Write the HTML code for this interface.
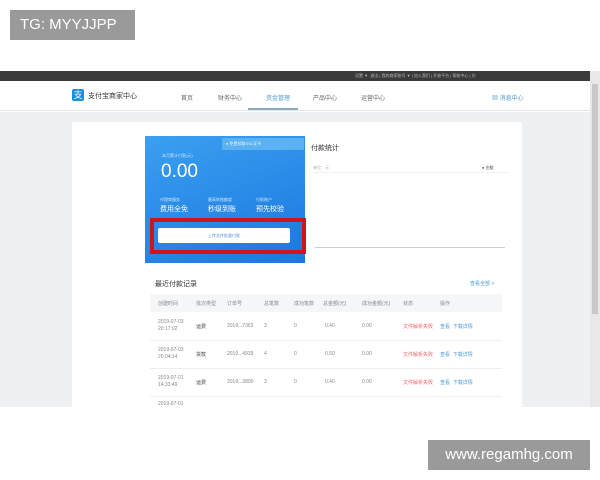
<!DOCTYPE html>
<html><head><meta charset="utf-8"><style>
*{margin:0;padding:0;box-sizing:border-box}
body{width:600px;height:480px;background:#fff;position:relative;overflow:hidden;font-family:"Liberation Sans","Noto Sans CJK SC",sans-serif}
.a{position:absolute}
.t{font-size:5px;color:#888;white-space:nowrap}
</style></head><body>
<div class="a" style="left:10px;top:10px;width:125px;height:30px;background:#9a9a9a;color:#fff;font-size:15px;line-height:30px;padding-left:10px">TG: MYYJJPP</div>
<div class="a" style="left:0;top:71px;width:590px;height:10px;background:#3a3a3a"></div>
<div class="a t" style="left:355px;top:73px;color:#bbb;font-size:4px">设置 ▼ &nbsp;退出 | 我的商家账号 ▼ | 加入我们 | 开放平台 | 帮助中心 | ▦</div>
<div class="a" style="left:590px;top:71px;width:10px;height:336px;background:#e8e8e8"></div>
<div class="a" style="left:592px;top:84px;width:6px;height:230px;background:#c8c8c8"></div>
<div class="a" style="left:0;top:81px;width:590px;height:30px;background:#fff;border-bottom:1px solid #e4e4e4"></div>
<div class="a" style="left:72px;top:89px;width:12px;height:12px;background:#1a8fe0;border-radius:2px;color:#fff;font-size:9px;line-height:12px;text-align:center">支</div>
<div class="a" style="left:88px;top:91px;font-size:7px;color:#333">支付宝商家中心</div>
<div class="a t" style="left:181px;top:93px;font-size:6px;color:#666">首页</div>
<div class="a t" style="left:218px;top:93px;font-size:6px;color:#666">财务中心</div>
<div class="a t" style="left:266px;top:93px;font-size:6px;color:#4a9ad8">资金管理</div>
<div class="a" style="left:248px;top:108px;width:50px;height:2px;background:#8ab"></div>
<div class="a t" style="left:313px;top:93px;font-size:6px;color:#666">产品中心</div>
<div class="a t" style="left:361px;top:93px;font-size:6px;color:#666">运营中心</div>
<div class="a t" style="left:492px;top:93px;font-size:6px;color:#4a9ad8">▦ 消息中心</div>
<div class="a" style="left:0;top:112px;width:590px;height:295px;background:#eef0f3"></div>
<div class="a" style="left:72px;top:122px;width:450px;height:285px;background:#fff"></div>
<div class="a" style="left:145px;top:136px;width:160px;height:127px;background:linear-gradient(160deg,#3aa0f0,#1b77e0)"></div>
<div class="a" style="left:222px;top:138px;width:82px;height:12px;background:#5bb2f2;color:#e6f2ff;font-size:4px;line-height:12px;padding-left:4px">● 免费领取SSL证书</div>
<div class="a t" style="left:162px;top:153px;color:#cfe6ff;font-size:4px">本月累计付款(元)</div>
<div class="a" style="left:161px;top:161px;color:#fff;font-size:19px">0.00</div>
<div class="a t" style="left:160px;top:197px;color:#cfe6ff;font-size:4px">代理商服务</div>
<div class="a t" style="left:208px;top:197px;color:#cfe6ff;font-size:4px">最高转账额度</div>
<div class="a t" style="left:256px;top:197px;color:#cfe6ff;font-size:4px">付款账户</div>
<div class="a t" style="left:160px;top:204px;color:#fff;font-size:7px">费用全免</div>
<div class="a t" style="left:208px;top:204px;color:#fff;font-size:7px">秒级到账</div>
<div class="a t" style="left:256px;top:204px;color:#fff;font-size:7px">预先校验</div>
<div class="a" style="left:150px;top:218px;width:156px;height:36px;border:4px solid #d0141c"></div>
<div class="a" style="left:158px;top:228px;width:132px;height:15px;background:#fff;border-radius:2px;color:#4a90d8;font-size:4px;text-align:center;line-height:15px">上传文件批量付款</div>
<div class="a t" style="left:311px;top:143px;color:#333;font-size:7px">付款统计</div>
<div class="a t" style="left:313px;top:165px;color:#aaa;font-size:4px">单位：元</div>
<div class="a t" style="left:482px;top:165px;color:#555;font-size:4px">● 金额</div>
<div class="a" style="left:313px;top:172px;width:195px;height:1px;background:#f0f0f0"></div>
<div class="a" style="left:315px;top:247px;width:190px;height:1px;background:#ccc"></div>
<div class="a" style="left:145px;top:267px;width:363px;height:140px;background:#fff"></div>
<div class="a t" style="left:155px;top:279px;color:#333;font-size:7px">最近付款记录</div>
<div class="a t" style="left:470px;top:280px;color:#4a9ad8;font-size:5px">查看全部 &gt;</div>
<div class="a" style="left:150px;top:294px;width:352px;height:18px;background:#f5f6f8"></div>
<div class="a t" style="top:300px;left:158px">创建时间</div><div class="a t" style="top:300px;left:196px">批次类型</div><div class="a t" style="top:300px;left:227px">订单号</div><div class="a t" style="top:300px;left:264px">总笔数</div><div class="a t" style="top:300px;left:294px">成功笔数</div><div class="a t" style="top:300px;left:323px">总金额(元)</div><div class="a t" style="top:300px;left:362px">成功金额(元)</div><div class="a t" style="top:300px;left:403px">状态</div><div class="a t" style="top:300px;left:440px">操作</div>
<div class="a" style="left:150px;top:340px;width:352px;height:1px;background:#eee"></div>
<div class="a" style="left:150px;top:368px;width:352px;height:1px;background:#eee"></div>
<div class="a" style="left:150px;top:396px;width:352px;height:1px;background:#eee"></div>
<div class="a t" style="top:319px;left:158px;line-height:7px">2019-07-03<br>20:17:02</div><div class="a t" style="top:323px;left:196px;color:#444">运费</div><div class="a t" style="top:323px;left:227px">2019...7363</div><div class="a t" style="top:323px;left:264px">3</div><div class="a t" style="top:323px;left:294px">0</div><div class="a t" style="top:323px;left:325px">0.40</div><div class="a t" style="top:323px;left:362px">0.00</div><div class="a t" style="top:323px;left:403px;color:#e66">文件解析失败</div><div class="a t" style="top:323px;left:440px;color:#4a9ad8">查看 &nbsp;下载详情</div>
<div class="a t" style="top:347px;left:158px;line-height:7px">2019-07-03<br>20:04:14</div><div class="a t" style="top:351px;left:196px;color:#444">货款</div><div class="a t" style="top:351px;left:227px">2019...4939</div><div class="a t" style="top:351px;left:264px">4</div><div class="a t" style="top:351px;left:294px">0</div><div class="a t" style="top:351px;left:325px">0.50</div><div class="a t" style="top:351px;left:362px">0.00</div><div class="a t" style="top:351px;left:403px;color:#e66">文件解析失败</div><div class="a t" style="top:351px;left:440px;color:#4a9ad8">查看 &nbsp;下载详情</div>
<div class="a t" style="top:375px;left:158px;line-height:7px">2019-07-01<br>14:33:49</div><div class="a t" style="top:379px;left:196px;color:#444">运费</div><div class="a t" style="top:379px;left:227px">2019...3800</div><div class="a t" style="top:379px;left:264px">3</div><div class="a t" style="top:379px;left:294px">0</div><div class="a t" style="top:379px;left:325px">0.40</div><div class="a t" style="top:379px;left:362px">0.00</div><div class="a t" style="top:379px;left:403px;color:#e66">文件解析失败</div><div class="a t" style="top:379px;left:440px;color:#4a9ad8">查看 &nbsp;下载详情</div>
<div class="a t" style="top:401px;left:158px">2019-07-01</div>
<div class="a" style="left:0;top:407px;width:600px;height:73px;background:#fff"></div>
<div class="a" style="left:428px;top:440px;width:162px;height:30px;background:#9a9a9a;color:#fff;font-size:15px;line-height:30px;text-align:center">www.regamhg.com</div>
</body></html>
